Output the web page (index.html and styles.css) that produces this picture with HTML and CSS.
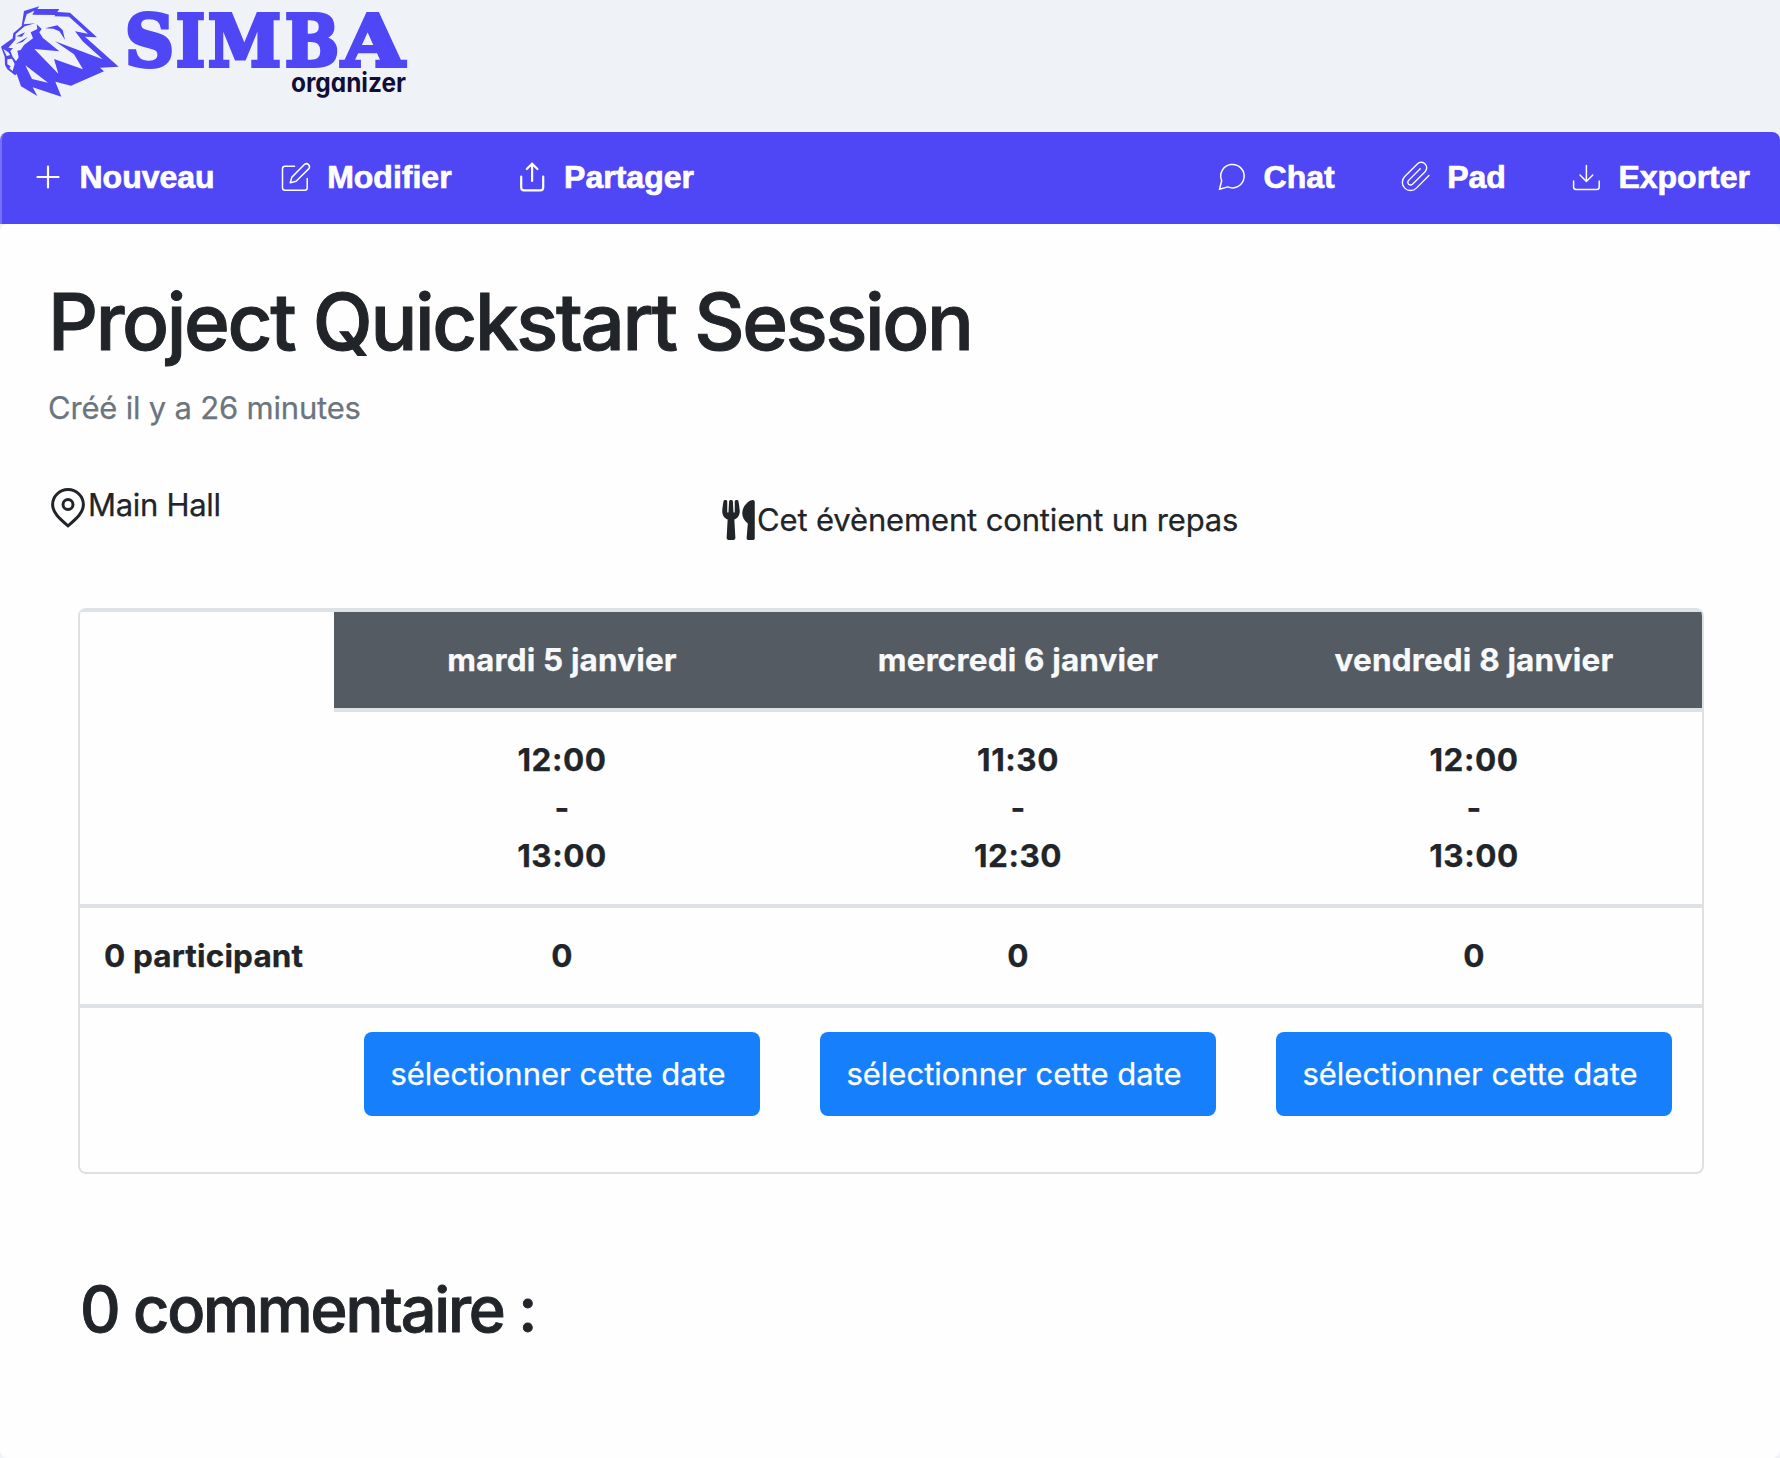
FILE: index.html
```html
<!DOCTYPE html>
<html lang="fr">
<head>
<meta charset="utf-8">
<title>Simba organizer</title>
<link rel="stylesheet" href="styles.css">
</head>
<body>
<header class="brand">
  <svg class="logo" width="420" height="110" viewBox="0 0 420 110" role="img" aria-label="Simba organizer">
    <g transform="scale(.33333)">
      <path class="mane" d="M72 33L118 19L112 27L178 27L172 36L210 38L291 112L255 110L356 200L300 203L312 214L213 257L166 245L184 290L98 262L112 288L63 259L50 222L45 226L22 208L15 195L14 170L3 140L38 115L40 100L65 78Z"/>
      <path class="cut" d="M80 43L103 32L97 44L166 45L163 49L207 50L264 101L225 94L248 124L308 178L165 124L222 163L249 208L162 177L175 221L103 147L178 154L128 113L118 97L125 87L110 73L112 87L92 97L99 115L72 135L62 150L52 152L56 172L48 184L38 170L31 153L39 145L25 143L46 119L47 102L74 79L106 70L71 73Z"/>
      <path class="cut" d="M10 147L25 157L31 165L20 168ZM22 178L36 176L44 192L38 213L28 205L32 199L22 193ZM76 196L144 248L96 237Z"/>
      <path class="mane" d="M135 85L172 76L188 90L195 119L178 94L160 86ZM49 109L75 97L66 110ZM47 132L84 110L68 126Z"/>
    </g>
    <text class="wordmark" y="66"><tspan x="125" textLength="49" lengthAdjust="spacingAndGlyphs">S</tspan><tspan x="176" textLength="29" lengthAdjust="spacingAndGlyphs">I</tspan><tspan x="208" textLength="73" lengthAdjust="spacingAndGlyphs">M</tspan><tspan x="285" textLength="54" lengthAdjust="spacingAndGlyphs">B</tspan><tspan x="342" textLength="62" lengthAdjust="spacingAndGlyphs">A</tspan></text>
    <text class="tagline" x="291" y="92" textLength="115" lengthAdjust="spacingAndGlyphs">organizer</text>
  </svg>
</header>
<nav class="bar">
  <div class="group">
    <a class="item"><svg class="icon bold" viewBox="0 0 32 32"><path d="M16 5.5v21M5.5 16h21"/></svg>Nouveau</a>
    <a class="item"><svg class="icon" viewBox="0 0 32 32"><path d="M14.5 5.3H5q-2.5 0-2.5 2.5v19q0 2.5 2.5 2.5h19.7q2.5 0 2.5-2.5v-9.3M10.3 21.7l1.6-5.6L24.6 3.3c2.6-2 6.3 1.400 4.300 4.300L16.100 20.200z"/></svg>Modifier</a>
    <a class="item"><svg class="icon bold" viewBox="0 0 32 32"><path d="M4.200 15.700v10.800q0 2.800 2.800 2.800h16.400q2.800 0 2.800-2.800V15.700M15.100 20V2.500M9.800 8l5.300-5.300L20.400 8"/></svg>Partager</a>
  </div>
  <div class="group">
    <a class="item"><svg class="icon" viewBox="0 0 32 32"><path d="M3.500 28.300L5.700 19.800A11.700 11.700 0 1 1 11.800 25.900Z"/></svg>Chat</a>
    <a class="item"><svg class="icon" viewBox="0 0 32 32"><path transform="translate(-.4 -.6) scale(1.37)" stroke-width="1" d="M21.440 11.050l-9.190 9.190a6 6 0 0 1-8.490-8.490l9.190-9.190a4 4 0 0 1 5.660 5.660l-9.200 9.190a2 2 0 0 1-2.830-2.830l8.490-8.480"/></svg>Pad</a>
    <a class="item"><svg class="icon" viewBox="0 0 32 32"><path d="M2.600 20v6q0 2.500 2.500 2.500h20.600q2.500 0 2.500-2.500v-6M15.400 4.500v16M9 14l6.400 6.500 6.400-6.500"/></svg>Exporter</a>
  </div>
</nav>
<main class="page">
  <h1 class="title">Project Quickstart Session</h1>
  <p class="created">Créé il y a 26 minutes</p>
  <div class="facts">
    <div class="fact place">
      <svg width="34" height="40" viewBox="0 0 34 40"><path class="pin" d="M17 37.800C10 31.800 1.600 25.300 1.600 16.600a15.400 15 0 0 1 30.800 0C32.400 25.300 24 31.800 17 37.800Z"/><circle class="pin" cx="17" cy="16.500" r="5"/></svg>
      <span>Main Hall</span>
    </div>
    <div class="fact meal">
      <svg width="33" height="40" viewBox="0 0 416 512"><path fill="currentColor" d="M207.900 15.200c.8 4.700 16.100 94.500 16.100 128.800 0 52.300-27.800 89.600-68.900 104.600L168 486.700c.7 13.700-10.200 25.300-24 25.300H80c-13.700 0-24.700-11.500-24-25.300l12.900-238.100C27.700 233.600 0 196.200 0 144 0 109.600 15.300 19.900 16.100 15.200 19.300-5.100 61.400-5.400 64 16.300v141.200c1.300 3.400 15.100 3.200 16 0 1.400-25.300 7.900-139.200 8-141.800 3.300-20.800 44.700-20.800 47.900 0 .2 2.700 6.600 116.500 8 141.800.9 3.200 14.800 3.400 16 0V16.300c2.600-21.600 44.800-21.400 48-1.100zm119.200 285.700l-15 185.100c-1.200 14 9.900 26 23.900 26h56c13.300 0 24-10.700 24-24V24c0-13.200-10.700-24-24-24-82.500 0-221.400 178.500-64.900 300.900z"/></svg>
      <span>Cet évènement contient un repas</span>
    </div>
  </div>
  <section class="poll">
    <div class="row days">
      <div class="blank"></div>
      <div class="day">mardi 5 janvier</div>
      <div class="day">mercredi 6 janvier</div>
      <div class="day">vendredi 8 janvier</div>
    </div>
    <div class="row times">
      <div></div>
      <div>12:00<br>-<br>13:00</div>
      <div>11:30<br>-<br>12:30</div>
      <div>12:00<br>-<br>13:00</div>
    </div>
    <div class="row counts">
      <div class="people">0 participant</div>
      <div>0</div>
      <div>0</div>
      <div>0</div>
    </div>
    <div class="row picks">
      <div></div>
      <div><button class="pick">sélectionner cette date</button></div>
      <div><button class="pick">sélectionner cette date</button></div>
      <div><button class="pick">sélectionner cette date</button></div>
    </div>
  </section>
  <h2 class="comments">0 commentaire :</h2>
</main>
</body>
</html>
```
FILE: styles.css
```css
* { box-sizing: border-box; }
body {
  margin: 0;
  height: 1458px;
  overflow: hidden;
  display: flex;
  flex-direction: column;
  background: #eff3f8;
  color: #212529;
  font: 400 31px/48px Inter, "Liberation Sans", sans-serif;
  -webkit-text-stroke: .25px currentColor;
}
.brand { height: 132px; flex: none; }
.logo { display: block; }
.mane { fill: #4f46f5; }
.cut { fill: #eff3f8; }
.wordmark {
  font: 700 71px "DejaVu Serif", serif;
  fill: #4f46f5;
  stroke: #4f46f5;
  stroke-width: 4;
}
.tagline {
  font: 700 26px Inter, sans-serif;
  font-feature-settings: "cv11";
  fill: #120e37;
}
.bar {
  height: 92px;
  flex: none;
  display: flex;
  justify-content: space-between;
  padding: 0 30px 2px 30px;
  border-left: 2px solid #7770f7;
  border-radius: 8px 8px 0 0;
  background: #4f46f5;
  color: #fff;
  font: 700 32px/88px "Liberation Sans", sans-serif;
}
.group { display: flex; gap: 65px; }
.item { display: flex; align-items: center; gap: 15.500px; -webkit-text-stroke: .7px #fff; }
.icon {
  width: 32px;
  height: 32px;
  fill: none;
  stroke: #fff;
  stroke-width: 1.500;
  stroke-linecap: round;
  stroke-linejoin: round;
}
.icon.bold { stroke-width: 2.200; }
.page {
  flex: 1;
  padding: 50px 76px 0 48px;
  border-radius: 8px;
  background: #fefefe;
}
.title {
  margin: 0;
  font-size: 78px;
  font-weight: 500;
  line-height: 96px;
  letter-spacing: -2.350px;
  white-space: nowrap;
  -webkit-text-stroke: 1px currentColor;
}
.created { margin: 14px 0 0; color: #6c757d; letter-spacing: -.2px; }
.facts {
  display: grid;
  grid-template-columns: 671px 1fr;
  margin-top: 49px;
  height: 127px;
  padding-left: 3px;
}
.fact { display: flex; align-items: center; height: 48px; letter-spacing: -.15px; }
.fact svg { display: block; flex: none; }
.place svg { margin-top: 6px; }
.place span { margin-left: 3px; letter-spacing: -.3px; }
.meal { margin-top: 15px; }
.meal span { margin-left: 2px; }
.pin { fill: none; stroke: currentColor; stroke-width: 3; }
.poll {
  margin-left: 30px;
  height: 566px;
  border: 2px solid #dee0e2;
  border-top: 0;
  border-radius: 8px;
  overflow: hidden;
}
.row {
  display: grid;
  grid-template-columns: 254px repeat(3, 456px);
  border-top: 4px solid #dee2e6;
  text-align: center;
  font-size: 31.500px;
  font-weight: 700;
  letter-spacing: .15px;
}
.day {
  height: 96px;
  background: #545b62;
  color: #f8f9fa;
  line-height: 96px;
}
.times { border-top: 0; }
.times > div { height: 196px; padding-top: 28px; letter-spacing: .5px; }
.times > div + div { border-top: 4px solid #dee2e6; padding-top: 24px; }
.counts > div { height: 96px; line-height: 96px; }
.people { padding-left: 24px; text-align: left; }
.picks > div { padding: 24px 30px 0; }
.pick {
  display: block;
  width: 396px;
  height: 84px;
  padding: 0 8px 0 0;
  border: 0;
  border-radius: 8px;
  background: #167ffc;
  color: #fff;
  font: 400 31px/84px Inter, sans-serif;
  white-space: nowrap;
}
.comments {
  margin: 97px 0 0 32px;
  font-size: 63px;
  font-weight: 500;
  line-height: 76px;
  letter-spacing: -2.200px;
  white-space: nowrap;
  -webkit-text-stroke: .9px currentColor;
}
```
